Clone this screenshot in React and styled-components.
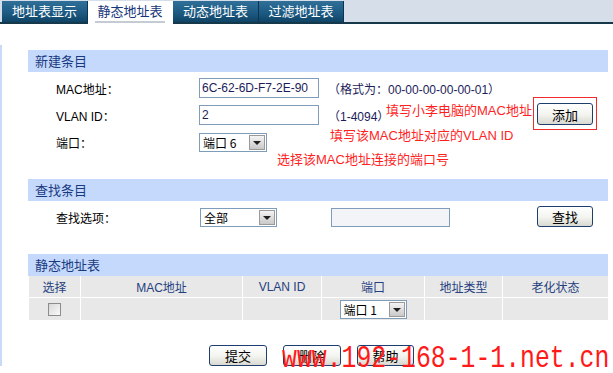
import React from "react";
import styled, { createGlobalStyle } from "styled-components";

const Global = createGlobalStyle`
  html, body { margin: 0; padding: 0; background: #fff; }
  body { font-family: "Liberation Sans", "Noto Sans CJK SC", sans-serif; font-size: 12px; color: #000; }
`;

const Page = styled.div`
  position: relative;
  width: 613px;
  height: 373px;
  overflow: hidden;
  background: #fff;
`;

const TabBar = styled.div`
  display: flex;
  height: 21px;
  padding: 1px 0 0 2px;
  background: #d6dee9;
  border-bottom: 2px solid #15394b;
`;

const Tab = styled.div`
  width: ${(p) => p.$w}px;
  height: ${(p) => (p.$active ? 23 : 21)}px;
  box-sizing: border-box;
  display: flex;
  align-items: ${(p) => (p.$active ? "flex-start" : "center")};
  justify-content: center;
  font-family: "Noto Sans CJK SC", sans-serif;
  font-size: 13px;
  color: ${(p) => (p.$active ? "#16357a" : "#fff")};
  background: ${(p) =>
    p.$active ? "#fff" : "linear-gradient(#2f6f98 0%, #1f5d86 50%, #0f4466 100%)"};
  border-right: 1px solid ${(p) => (p.$active ? "#fff" : "#0c3350")};
  position: relative;
  z-index: 1;
`;

const TabLabel = styled.span`
  padding: 0 2px 1px;
  border-bottom: ${(p) => (p.$active ? "2px solid #c5cbd3" : "none")};
  line-height: 18px;
  margin-top: ${(p) => (p.$active ? "1px" : "0")};
`;

const Body = styled.div`
  border-left: 2px solid #c8daf6;
  margin-top: 21px;
  padding: 5px 5px 0 26px;
`;

const Section = styled.section`
  position: relative;
  margin-bottom: ${(p) => p.$mb}px;
`;

const SectionHead = styled.div`
  height: 22px;
  line-height: 22px;
  padding-left: 7px;
  background: #c4d9fc;
  color: #1a3a80;
  font-family: "Noto Sans CJK SC", sans-serif;
  font-size: 13px;
`;

const FormGrid = styled.div`
  display: grid;
  grid-template-columns: 143px 129px 1fr 56px;
  grid-auto-rows: 20px;
  row-gap: 7px;
  padding: 6px 15px 0 28px;
  align-items: center;
`;

const Label = styled.div`
  font-family: "Liberation Sans", "Noto Sans CJK SC", sans-serif;
  font-size: 12px;
  color: #000;
`;

const TextInput = styled.div`
  box-sizing: border-box;
  width: ${(p) => p.$w}px;
  height: ${(p) => p.$h || 20}px;
  margin-left: ${(p) => p.$ml || 0}px;
  border: 1px solid #7f9db9;
  background: ${(p) => (p.$disabled ? "#f2f4f8" : "#fff")};
  padding: 0 2px;
  line-height: 18px;
  font-family: "Liberation Sans", sans-serif;
  font-size: 12px;
  color: #1c1c5a;
`;

const Hint = styled.div`
  font-family: "Liberation Sans", "Noto Sans CJK SC", sans-serif;
  font-size: 12px;
  color: #1c1c5a;
  white-space: nowrap;
`;

const SelectBox = styled.div`
  box-sizing: border-box;
  width: ${(p) => p.$w}px;
  height: 19px;
  margin-left: ${(p) => p.$ml || 0}px;
  border: 1px solid #7f9db9;
  background: #fff;
  display: flex;
  align-items: center;
  justify-content: space-between;
  padding: 0 1px 0 3px;
  font-family: "Noto Sans CJK SC", sans-serif;
  font-size: 12px;
  color: #000;
`;

const SelectArrow = styled.div`
  width: 16px;
  height: 15px;
  box-sizing: border-box;
  border: 1px solid #9a9a9a;
  background: linear-gradient(#f4f4f4, #c9c9c9);
  display: flex;
  align-items: center;
  justify-content: center;
  &::after {
    content: "";
    border-left: 4px solid transparent;
    border-right: 4px solid transparent;
    border-top: 4px solid #202020;
    margin-top: 1px;
  }
`;

const Button = styled.button`
  box-sizing: border-box;
  width: ${(p) => p.$w || 56}px;
  height: ${(p) => p.$h || 21}px;
  padding: 0;
  border: 1px solid #1d3e6e;
  border-radius: 3px;
  background: linear-gradient(#ffffff 0%, #f3f3ef 55%, #d9d9d2 100%);
  font-family: "Noto Sans CJK SC", sans-serif;
  font-size: 13px;
  color: #000;
  line-height: 19px;
`;

const ButtonCell = styled.div`
  grid-column: 4;
  grid-row: ${(p) => p.$row};
  align-self: end;
  position: relative;
`;

const RedFrame = styled.div`
  position: absolute;
  left: -4px;
  top: -6px;
  width: 64px;
  height: 33px;
  box-sizing: border-box;
  border: 1px solid #ee2a2a;
`;

const Note = styled.div`
  position: absolute;
  left: ${(p) => p.$x}px;
  top: ${(p) => p.$y}px;
  font-family: "Liberation Sans", "Noto Sans CJK SC", sans-serif;
  font-size: 13px;
  color: #ff1f1f;
  white-space: nowrap;
`;

const Table = styled.table`
  width: 580px;
  border-collapse: collapse;
  table-layout: fixed;
`;

const Th = styled.th`
  height: 21px;
  background: #e8e8e8;
  border: 1px solid #fff;
  border-top: none;
  padding: 0;
  font-weight: normal;
  font-family: "Liberation Sans", "Noto Sans CJK SC", sans-serif;
  font-size: 12px;
  color: #253f80;
  text-align: center;
`;

const Td = styled.td`
  height: 22px;
  background: #e8e8e8;
  border: 1px solid #fff;
  padding: 0;
  text-align: center;
  vertical-align: middle;
`;

const Check = styled.span`
  display: inline-block;
  width: 13px;
  height: 13px;
  box-sizing: border-box;
  border: 1px solid #8c8c8c;
  background: linear-gradient(135deg, #d8d8d8, #fafafa);
  vertical-align: middle;
`;

const CenterCell = styled.div`
  display: flex;
  justify-content: center;
`;

const Footer = styled.div`
  display: flex;
  gap: 16px;
  padding-left: 181px;
`;

const Watermark = styled.div`
  position: absolute;
  left: 282px;
  top: 338px;
  font-family: "Liberation Mono", monospace;
  font-size: 24.8px;
  line-height: 30px;
  color: #ff1a1a;
  transform: scaleY(1.3);
  transform-origin: left top;
  white-space: nowrap;
`;

const tabs = [
  { t: "地址表显示", w: 86 },
  { t: "静态地址表", w: 85, active: true },
  { t: "动态地址表", w: 86 },
  { t: "过滤地址表", w: 85 },
];

export default function App() {
  return (
    <Page>
      <Global />
      <TabBar>
        {tabs.map((x) => (
          <Tab key={x.t} $w={x.w} $active={x.active}>
            <TabLabel $active={x.active}>{x.t}</TabLabel>
          </Tab>
        ))}
      </TabBar>
      <Body>
        <Section $mb={27}>
          <SectionHead>新建条目</SectionHead>
          <FormGrid>
            <Label>MAC地址：</Label>
            <TextInput $w={120}>6C-62-6D-F7-2E-90</TextInput>
            <Hint>（格式为：00-00-00-00-00-01）</Hint>
            <div />
            <Label>VLAN ID：</Label>
            <TextInput $w={120}>2</TextInput>
            <Hint>（1-4094）</Hint>
            <ButtonCell $row={2}>
              <RedFrame />
              <Button $h={22}>添加</Button>
            </ButtonCell>
            <Label>端口：</Label>
            <SelectBox $w={68}>
              <span>端口 6</span>
              <SelectArrow />
            </SelectBox>
          </FormGrid>
          <Note $x={358} $y={50}>填写小李电脑的MAC地址</Note>
          <Note $x={302} $y={75}>填写该MAC地址对应的VLAN ID</Note>
          <Note $x={249} $y={99}>选择该MAC地址连接的端口号</Note>
        </Section>

        <Section $mb={27}>
          <SectionHead>查找条目</SectionHead>
          <FormGrid>
            <Label>查找选项：</Label>
            <SelectBox $w={77} $ml={1}>
              <span>全部</span>
              <SelectArrow />
            </SelectBox>
            <TextInput $w={119} $h={19} $ml={3} $disabled />
            <ButtonCell $row={1}>
              <Button>查找</Button>
            </ButtonCell>
          </FormGrid>
        </Section>

        <Section $mb={24}>
          <SectionHead>静态地址表</SectionHead>
          <Table>
            <colgroup>
              <col style={{ width: 52 }} />
              <col style={{ width: 162 }} />
              <col style={{ width: 79 }} />
              <col style={{ width: 103 }} />
              <col style={{ width: 78 }} />
              <col style={{ width: 106 }} />
            </colgroup>
            <thead>
              <tr>
                <Th>选择</Th>
                <Th>MAC地址</Th>
                <Th>VLAN ID</Th>
                <Th>端口</Th>
                <Th>地址类型</Th>
                <Th>老化状态</Th>
              </tr>
            </thead>
            <tbody>
              <tr>
                <Td>
                  <Check />
                </Td>
                <Td />
                <Td />
                <Td>
                  <CenterCell>
                    <SelectBox $w={67}>
                      <span>端口 1</span>
                      <SelectArrow />
                    </SelectBox>
                  </CenterCell>
                </Td>
                <Td />
                <Td />
              </tr>
            </tbody>
          </Table>
        </Section>

        <Footer>
          <Button $w={58}>提交</Button>
          <Button $w={58}>删除</Button>
          <Button $w={57}>帮助</Button>
        </Footer>
      </Body>
      <Watermark>www.192-168-1-1.net.cn</Watermark>
    </Page>
  );
}
